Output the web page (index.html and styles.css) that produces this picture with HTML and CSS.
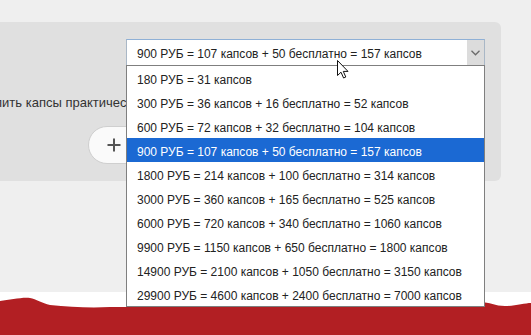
FILE: index.html
```html
<!DOCTYPE html>
<html lang="ru">
<head>
    <meta charset="UTF-8">
    <meta name="viewport" content="width=device-width, initial-scale=1.0">
    <title>Купить капсы</title>
    <link rel="stylesheet" href="styles.css">
</head>
<body>

    <!-- Buy panel -->
    <div class="buy-panel">
        <div class="select-row">
            <div class="fake-select">
                <span class="select-value">900 РУБ = 107 капсов + 50 бесплатно = 157 капсов</span>
                <span class="select-arrow">
                    <svg width="9" height="6" viewBox="0 0 9 6"><path d="M0.5 0.8 L4.5 4.8 L8.5 0.8" fill="none" stroke="#6b6b6b" stroke-width="1.3"/></svg>
                </span>
            </div>
        </div>

        <div class="label-clip">
            <p class="buy-label">Купить капсы практически без переплаты</p>
        </div>

        <div class="button-row">
            <button class="add-button">
                <svg width="14" height="14" viewBox="0 0 14 14"><path d="M7 0.5 V13.5 M0.5 7 H13.5" stroke="#555" stroke-width="2"/></svg>
            </button>
        </div>

        <!-- Open dropdown -->
        <ul class="options">
            <li>180 РУБ = 31 капсов</li>
            <li>300 РУБ = 36 капсов + 16 бесплатно = 52 капсов</li>
            <li>600 РУБ = 72 капсов + 32 бесплатно = 104 капсов</li>
            <li class="selected">900 РУБ = 107 капсов + 50 бесплатно = 157 капсов</li>
            <li>1800 РУБ = 214 капсов + 100 бесплатно = 314 капсов</li>
            <li>3000 РУБ = 360 капсов + 165 бесплатно = 525 капсов</li>
            <li>6000 РУБ = 720 капсов + 340 бесплатно = 1060 капсов</li>
            <li>9900 РУБ = 1150 капсов + 650 бесплатно = 1800 капсов</li>
            <li>14900 РУБ = 2100 капсов + 1050 бесплатно = 3150 капсов</li>
            <li>29900 РУБ = 4600 капсов + 2400 бесплатно = 7000 капсов</li>
        </ul>

        <!-- Mouse pointer -->
        <svg class="pointer" width="12" height="19" viewBox="0 0 12 19">
            <path d="M0.5 0.5 L0.5 15.5 L4 12.2 L6.6 18 L8.8 17 L6.3 11.4 L11 11.4 Z" fill="#fff" stroke="#111" stroke-width="1" stroke-linejoin="round"/>
        </svg>
    </div>

    <!-- Red torn footer -->
    <div class="footer">
        <svg class="wave" width="531" height="43" viewBox="0 0 531 43" preserveAspectRatio="none">
            <path d="M0 9 C10 8 22 5 30 6 C36 7 42 11 50 13 C70 15 90 16 110 15 L125 15 L480 10 C490 10 495 14 505 14 C515 14 525 11 531 11 L531 43 L0 43 Z" fill="#b21f23"/>
        </svg>
    </div>

</body>
</html>
```

FILE: styles.css
```css
body {
    margin: 0;
    font-family: "Liberation Sans", Arial, sans-serif;
    font-size: 12px;
    color: #222;
    background-color: #efefef;
    height: 335px;
    overflow: hidden;
    display: flex;
    flex-direction: column;
}

.buy-panel {
    position: relative;
    width: 501px;
    height: 159px;
    margin-top: 22px;
    padding-top: 17px;
    box-sizing: border-box;
    background-color: #e0e0e0;
    border-radius: 0 6px 6px 0;
}

.select-row {
    display: flex;
    padding-left: 126px;
}

.fake-select {
    display: flex;
    align-items: center;
    width: 359px;
    height: 27px;
    box-sizing: border-box;
    background-color: white;
    border: 1px solid #a9b7c6;
    border-top-color: #8fb0d6;
}

.select-value {
    flex: 1;
    padding: 2px 0 0 10px;
    white-space: nowrap;
}

.select-arrow {
    display: flex;
    align-items: center;
    justify-content: center;
    width: 17px;
    height: 100%;
    background-color: #dcdcdc;
}

/* label runs on under the open list, so clip it at the list edge */
.label-clip {
    width: 126px;
    margin-top: 29px;
    overflow: hidden;
}

.buy-label {
    margin: 0 0 0 -19px;
    line-height: 16px;
    font-size: 13px;
    color: #333;
    white-space: nowrap;
}

.button-row {
    display: flex;
    padding-left: 88px;
    margin-top: 15px;
}

.add-button {
    display: flex;
    align-items: center;
    width: 160px;
    height: 38px;
    padding-left: 18px;
    background-color: #fafafa;
    border: 1px solid #cfcfcf;
    border-radius: 19px;
    cursor: pointer;
}

/* Dropdown list */
.options {
    position: absolute;
    top: 43px;
    left: 126px;
    width: 359px;
    box-sizing: border-box;
    margin: 0;
    padding: 0;
    list-style: none;
    font-size: 12px;
    background-color: white;
    border: 1px solid #7f7f7f;
    z-index: 5;
}

.options li {
    box-sizing: border-box;
    height: 24px;
    padding: 4px 0 0 10px;
    line-height: 20px;
    white-space: nowrap;
}

.options li.selected {
    background-color: #1b69d3;
    color: white;
}

.pointer {
    position: absolute;
    top: 38px;
    left: 337px;
    z-index: 10;
}

.footer {
    margin-top: auto;
    height: 43px;
    background-color: white;
}

.wave {
    display: block;
}
```
